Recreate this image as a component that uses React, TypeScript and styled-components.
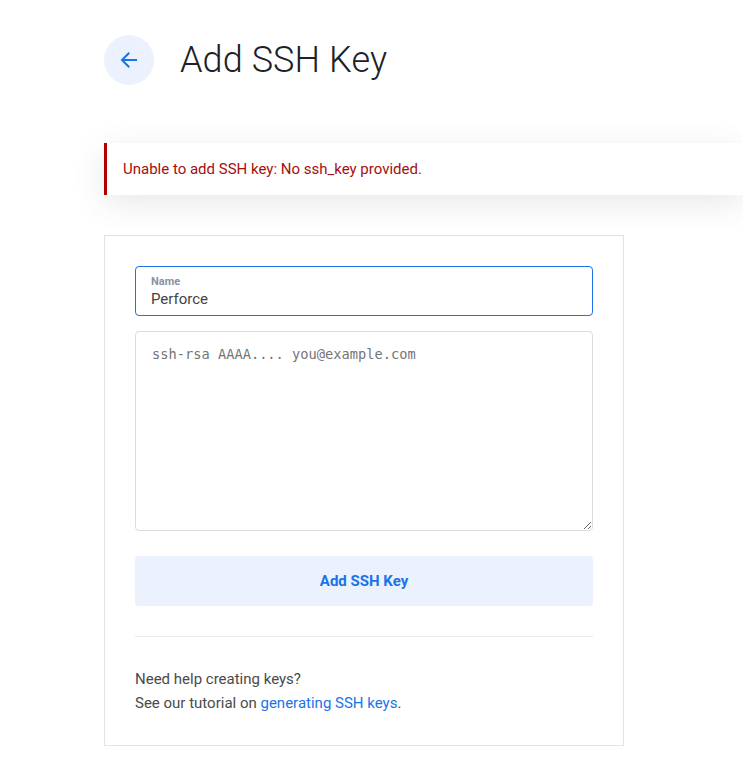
import React from "react";
import styled, { createGlobalStyle } from "styled-components";

const GlobalStyle = createGlobalStyle`
  html, body {
    margin: 0;
    padding: 0;
    background: #ffffff;
    font-family: Roboto, "Liberation Sans", Arial, sans-serif;
    color: #202124;
  }
  * {
    box-sizing: border-box;
  }
`;

const Page = styled.div`
  padding: 35px 0 32px 104px;
  overflow: hidden;
`;

const Header = styled.header`
  display: flex;
  align-items: center;
  gap: 26px;
  height: 50px;
`;

const BackButton = styled.button`
  width: 50px;
  height: 50px;
  border-radius: 50%;
  border: none;
  padding: 0;
  background: #ebf2fe;
  color: #1a73e8;
  display: flex;
  align-items: center;
  justify-content: center;
  cursor: pointer;
`;

const Title = styled.h1`
  margin: 0;
  font-size: 36px;
  font-weight: 300;
  color: #202124;
  letter-spacing: 0.1px;
`;

const Alert = styled.div`
  margin-top: 58px;
  height: 52px;
  display: flex;
  align-items: center;
  padding-left: 16px;
  border-left: 3px solid #b00000;
  background: #ffffff;
  color: #a50e0e;
  font-size: 15px;
  box-shadow: 0 8px 32px rgba(60, 64, 67, 0.12);
`;

const Card = styled.section`
  margin-top: 40px;
  width: 520px;
  border: 1px solid #e3e3e3;
  padding: 30px;
  background: #ffffff;
  display: flex;
  flex-direction: column;
`;

const Field = styled.label`
  display: flex;
  flex-direction: column;
  justify-content: center;
  height: 50px;
  padding: 1px 15px 0;
  border: 1px solid #1a73e8;
  border-radius: 4px;
`;

const FieldLabel = styled.span`
  font-size: 11px;
  font-weight: 700;
  color: #8a91a6;
  line-height: 14px;
`;

const FieldInput = styled.input`
  border: none;
  outline: none;
  padding: 0;
  margin: 0;
  font-family: Roboto, "Liberation Sans", Arial, sans-serif;
  font-size: 15px;
  color: #444444;
  line-height: 20px;
  background: transparent;
`;

const KeyArea = styled.textarea`
  margin-top: 15px;
  height: 200px;
  width: 100%;
  padding: 12px 16px;
  border: 1px solid #dadce0;
  border-radius: 4px;
  font-family: "DejaVu Sans Mono", "Liberation Mono", monospace;
  font-size: 13.7px;
  line-height: 20px;
  color: #3c4043;
  outline: none;
  &::placeholder {
    color: #757575;
  }
`;

const SubmitButton = styled.button`
  margin-top: 25px;
  height: 50px;
  border: none;
  border-radius: 4px;
  background: #ebf2fe;
  color: #1a73e8;
  font-family: Roboto, "Liberation Sans", Arial, sans-serif;
  font-size: 15px;
  font-weight: 700;
  cursor: pointer;
`;

const Divider = styled.hr`
  margin: 30px 0 0;
  border: none;
  border-top: 1px solid #ebebeb;
`;

const Help = styled.div`
  margin-top: 30px;
  font-size: 15px;
  line-height: 24px;
  color: #4a4a4a;
  p {
    margin: 0;
  }
`;

const Link = styled.a`
  color: #1a73e8;
  text-decoration: none;
`;

const ArrowLeft = () => (
  <svg width="18" height="18" viewBox="0 0 18 18" fill="none">
    <path
      d="M16 9H2.5M8.5 2.5L2 9l6.5 6.5"
      stroke="currentColor"
      strokeWidth="2"
      strokeLinecap="square"
    />
  </svg>
);

export default function App() {
  return (
    <>
      <GlobalStyle />
      <Page>
        <Header>
          <BackButton aria-label="Back">
            <ArrowLeft />
          </BackButton>
          <Title>Add SSH Key</Title>
        </Header>

        <Alert>Unable to add SSH key: No ssh_key provided.</Alert>

        <Card>
          <Field>
            <FieldLabel>Name</FieldLabel>
            <FieldInput defaultValue="Perforce" />
          </Field>
          <KeyArea placeholder="ssh-rsa AAAA.... you@example.com" />
          <SubmitButton>Add SSH Key</SubmitButton>
          <Divider />
          <Help>
            <p>Need help creating keys?</p>
            <p>
              See our tutorial on <Link href="#">generating SSH keys</Link>.
            </p>
          </Help>
        </Card>
      </Page>
    </>
  );
}
